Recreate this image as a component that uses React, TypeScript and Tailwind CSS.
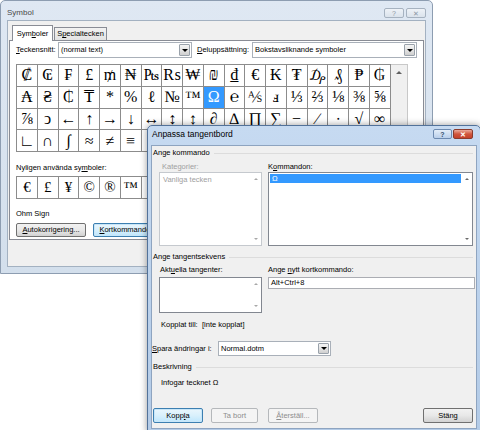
import React from 'react';

const ROWS: string[][] = [
  ['₡', '₢', '₣', '£', '₥', '₦', '₧', '₨', '₩', '₪', '₫', '€', '₭', '₮', '₯', '₰', '₱', '₲'],
  ['₳', '₴', '₵', '₸', '*', '%', 'ℓ', '№', '™', 'Ω', '℮', '⅍', 'ⅎ', '⅓', '⅔', '⅛', '⅜', '⅝'],
  ['⅞', 'ↄ', '←', '↑', '→', '↓', '↔', '↕', '↨', '∂', '∆', '∏', '∑', '−', '∕', '∙', '√', '∞'],
  // the rest of this row sits under the shortcut dialog
  ['∟', '∩', '∫', '≈', '≠', '≡', '', '', '', '', '', '', '', '', '', '', '', ''],
];

const RECENT = ['€', '£', '¥', '©', '®', '™', '', '', '', '', '', '', '', '', '', ''];

const SYM_FONT = "font-['Liberation_Serif','DejaVu_Serif',serif]";

function Tri() {
  return <div className="w-0 h-0 border-l-[3px] border-r-[3px] border-t-[3px] border-l-transparent border-r-transparent border-t-black" />;
}

function Combo({ text, w }: { text: string; w: string }) {
  return (
    <div className={`${w} h-full flex items-stretch bg-white border border-[#a9b0b9]`}>
      <div className="flex-1 flex items-center pl-[2px] leading-none">{text}</div>
      <div className="w-[11px] m-[1px] flex items-center justify-center border border-[#9aa2ab] rounded-[1px] bg-linear-to-b from-[#f4f4f4] via-[#e4e4e4] to-[#cfcfcf]">
        <Tri />
      </div>
    </div>
  );
}

function Btn({ children, w, kind = 'normal' }: { children: React.ReactNode; w: string; kind?: 'normal' | 'focus' | 'disabled' }) {
  const look =
    kind === 'focus'
      ? 'border-[#3c7fb1] bg-linear-to-b from-[#eaf6fd] via-[#d9f0fc] to-[#bee6fd] shadow-[inset_0_0_0_1px_#c8e6f8]'
      : kind === 'disabled'
        ? 'border-[#b5b8bb] bg-[#f4f4f4] text-[#8d8d8d]'
        : 'border-[#707070] bg-linear-to-b from-[#f2f2f2] via-[#e8e8e8] to-[#d2d2d2]';
  return (
    <div className={`${w} h-full flex items-center justify-center border rounded-[2px] leading-none ${look}`}>
      {children}
    </div>
  );
}

function ListArrows({ dark = false }: { dark?: boolean }) {
  return (
    <div className="w-[10px] flex flex-col items-center justify-between py-[5px]">
      <div className={`w-0 h-0 border-l-[2.5px] border-r-[2.5px] border-b-[2.5px] border-l-transparent border-r-transparent ${dark ? 'border-b-[#6a6a6a]' : 'border-b-[#a8a8a8]'}`} />
      <div className={`w-0 h-0 border-l-[2.5px] border-r-[2.5px] border-t-[2.5px] border-l-transparent border-r-transparent ${dark ? 'border-t-[#6a6a6a]' : 'border-t-[#a8a8a8]'}`} />
    </div>
  );
}

function GroupHeader({ text }: { text: string }) {
  return (
    <div className="h-[10px] flex items-center pl-[1px] pr-[3px] leading-none">
      <span>{text}</span>
      <div className="flex-1 ml-[4px] border-t border-[#dcdcdc]" />
    </div>
  );
}

function SymbolWindow() {
  return (
    <div className="absolute left-0 top-0 w-[433px] h-[274px] rounded-t-[5px] border border-[#8d9db1] bg-linear-to-b from-[#dfe8f3] to-[#d3dfec] flex flex-col">
      {/* title bar */}
      <div className="h-[19px] flex items-start justify-between pl-[6px] pr-[6px] pt-[7px] shrink-0">
        <span className="h-[10px] leading-[10px] text-[8px] text-[#4a4a4a]">Symbol</span>
        <div className="flex gap-[2px]">
          <div className="w-[20px] h-[10px] flex items-center justify-center border border-[#a6b2c0] rounded-[2px] bg-linear-to-b from-[#eef2f7] to-[#dbe3ec] text-[7px] leading-none text-[#8c97a4]">?</div>
          <div className="w-[20px] h-[10px] flex items-center justify-center border border-[#a6b2c0] rounded-[2px] bg-linear-to-b from-[#eef2f7] to-[#dbe3ec] text-[7px] leading-none text-[#8c97a4]">✕</div>
        </div>
      </div>
      {/* client area */}
      <div className="flex-1 mx-[6px] mb-[6px] bg-[#f0f0f0] border border-[#a3b1c1] flex flex-col">
        {/* tabs */}
        <div className="h-[19px] pt-[3px] pl-[4px] flex items-end shrink-0">
          <div className="h-[16px] w-[41px] -mb-px z-10 flex items-center justify-center border border-b-0 border-[#898c95] bg-white leading-none">
            Sym<span className="underline">b</span>oler
          </div>
          <div className="h-[13px] w-[53px] ml-px flex items-center justify-center border border-b-0 border-[#898c95] bg-linear-to-b from-[#f2f2f2] to-[#e3e3e3] leading-none">
            S<span className="underline">p</span>ecialtecken
          </div>
        </div>
        {/* panel */}
        <div className="mx-px h-[200px] border border-[#898c95] bg-white flex flex-col pl-[6px] shrink-0">
          <div className="h-[16px] mt-px flex items-center">
            <span className="w-[42px] leading-none"><span className="underline">T</span>eckensnitt:</span>
            <Combo text="(normal text)" w="w-[134px]" />
            <span className="w-[55px] ml-[5px] leading-none"><span className="underline">D</span>eluppsättning:</span>
            <Combo text="Bokstavsliknande symboler" w="w-[165px]" />
          </div>
          <div className="mt-[6px] flex">
            <div className={`grid grid-cols-[repeat(18,20.75px)] border-l border-t border-[#8c8c8c] ${SYM_FONT}`}>
              {ROWS.flat().map((ch, i) => (
                <div
                  key={i}
                  className={`h-[21.75px] flex items-center justify-center border-r border-b border-[#8c8c8c] text-[16px] leading-none ${
                    ch === 'Ω' ? 'bg-[#3399ff] text-white' : 'text-black'
                  }`}
                >
                  {ch}
                </div>
              ))}
            </div>
            <div className="w-[17px] border-t border-r border-b border-[#c8c8c8] bg-[#f0f0f0] flex flex-col items-center">
              <div className="h-[14px] flex items-center justify-center">
                <div className="w-0 h-0 border-l-[3px] border-r-[3px] border-b-[3px] border-l-transparent border-r-transparent border-b-[#606060]" />
              </div>
              <div className="flex-1" />
              <div className="w-[13px] h-[12px] border border-[#9a9a9a] rounded-[2px] bg-linear-to-r from-[#f0f0f0] to-[#dadada]" />
            </div>
          </div>
          <div className="mt-[11px] h-[10px] leading-[10px]">
            Nyligen använda sy<span className="underline">m</span>boler:
          </div>
          <div className={`mt-[3px] flex border-l border-t border-[#8c8c8c] self-start ${SYM_FONT}`}>
            {RECENT.map((ch, i) => (
              <div key={i} className="w-[20.75px] h-[22px] flex items-center justify-center border-r border-b border-[#8c8c8c] text-[15px] leading-none">
                {ch}
              </div>
            ))}
          </div>
          <div className="mt-[10px] h-[10px] leading-[10px]">Ohm Sign</div>
          <div className="mt-[4px] h-[14px] flex">
            <Btn w="w-[70px]"><span className="underline">A</span>utokorrigering...</Btn>
            <div className="ml-[7px]">
              <Btn w="w-[70px]" kind="focus"><span className="underline">K</span>ortkommando...</Btn>
            </div>
          </div>
        </div>
      </div>
    </div>
  );
}

function KeyboardDialog() {
  return (
    <div className="absolute left-[147px] top-[125px] w-[334px] h-[308px] rounded-t-[5px] border border-[#52729a] bg-linear-to-b from-[#c6daf1] via-[#bcd2ec] to-[#b3cbe7] shadow-[0_0_7px_rgba(0,0,0,0.4)] flex flex-col">
      <div className="h-[19px] flex items-start justify-between pl-[4px] pr-[7px] pt-[3px] shrink-0">
        <span className="h-[10px] leading-[10px] text-[8.5px] text-black">Anpassa tangentbord</span>
        <div className="flex gap-px">
          <div className="w-[19px] h-[10px] flex items-center justify-center border border-[#6d8ab0] rounded-[2px] bg-linear-to-b from-[#e3edf8] to-[#b9cfea] text-[7px] font-bold leading-none text-[#35506f]">?</div>
          <div className="w-[20px] h-[10px] flex items-center justify-center border border-[#8a3b2c] rounded-[2px] bg-linear-to-b from-[#e9a99b] via-[#d0553c] to-[#c4402a] text-[7px] font-bold leading-none text-white">✕</div>
        </div>
      </div>
      <div className="flex-1 mx-[3px] mb-[3px] bg-[#f0f0f0] border border-[#8ea4c0] flex flex-col">
        <div className="mt-[2px]"><GroupHeader text="Ange kommando" /></div>
        <div className="mt-[4px] flex h-[9px] leading-[9px]">
          <span className="ml-[10px] w-[100px] text-[#a0a0a0]">Kategorier:</span>
          <span className="ml-[6px]">K<span className="underline">o</span>mmandon:</span>
        </div>
        <div className="mt-px flex h-[74px]">
          <div className="ml-[7px] w-[103px] bg-white border border-[#c5c9ce] flex">
            <div className="flex-1 pl-[3px] pt-[2px] leading-[9px] text-[#a0a0a0]">Vanliga tecken</div>
            <ListArrows />
          </div>
          <div className="ml-[6px] w-[205px] bg-white border border-[#828790] flex">
            <div className="flex-1 p-[1px]">
              <div className="h-[9px] bg-[#3399ff] text-white pl-[2px] leading-[9px] overflow-hidden">Ω</div>
            </div>
            <ListArrows dark />
          </div>
        </div>
        <div className="mt-[6px]"><GroupHeader text="Ange tangentsekvens" /></div>
        <div className="mt-[3px] flex h-[10px] leading-[10px]">
          <span className="ml-[8px] w-[102px]">Akt<span className="underline">u</span>ella tangenter:</span>
          <span className="ml-[6px]">Ange <span className="underline">n</span>ytt kortkommando:</span>
        </div>
        <div className="mt-[2px] flex items-start">
          <div className="ml-[7px] w-[103px] h-[36px] bg-white border border-[#828790] flex justify-end">
            <ListArrows />
          </div>
          <div className="ml-[6px] w-[207px] h-[12px] bg-white border border-[#abadb3] flex items-center pl-[2px] leading-none">
            Alt+Ctrl+8
          </div>
        </div>
        <div className="mt-[7px] h-[10px] flex leading-[10px]">
          <span className="ml-[9px] w-[41px]">Kopplat till:</span>
          <span>[inte kopplat]</span>
        </div>
        <div className="mt-[11px] h-[15px] flex items-center">
          <span className="w-[66px] leading-none"><span className="underline">S</span>para ändringar i:</span>
          <Combo text="Normal.dotm" w="w-[113px]" />
        </div>
        <div className="mt-[6px]"><GroupHeader text="Beskrivning" /></div>
        <div className="mt-[6px] h-[10px] leading-[10px] pl-[9px]">Infogar tecknet Ω</div>
        <div className="mt-[20px] h-[15px] flex">
          <div className="ml-px">
            <Btn w="w-[50px]" kind="focus">Kopp<span className="underline">l</span>a</Btn>
          </div>
          <div className="ml-[8px]">
            <Btn w="w-[47px]" kind="disabled">Ta bort</Btn>
          </div>
          <div className="ml-[10px]">
            <Btn w="w-[50px]" kind="disabled"><span className="underline">Å</span>terställ...</Btn>
          </div>
          <div className="ml-auto mr-[3px]">
            <Btn w="w-[50px]">Stäng</Btn>
          </div>
        </div>
      </div>
    </div>
  );
}

export default function App() {
  return (
    <div className="relative w-[480px] h-[430px] overflow-hidden bg-white text-black text-[7.5px] font-['Liberation_Sans',Arial,sans-serif]">
      <SymbolWindow />
      <KeyboardDialog />
    </div>
  );
}
